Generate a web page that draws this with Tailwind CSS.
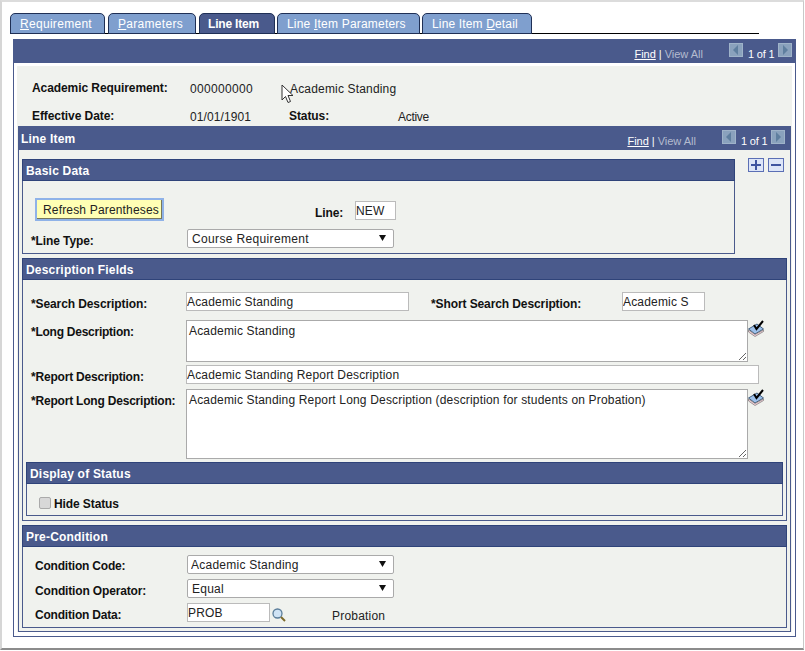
<!DOCTYPE html>
<html>
<head>
<meta charset="utf-8">
<script src="https://cdn.jsdelivr.net/npm/@tailwindcss/browser@4"></script>
</head>
<body class="bg-white">
<div class="relative w-[805px] h-[651px] overflow-hidden bg-white font-['Liberation_Sans',Arial,sans-serif] text-[12px] leading-[14px] tracking-[0.17px] text-[#222]">
  <div class="w-[804px] h-[650px] border-l-2 border-t-2 border-l-[#d6d6d6] border-t-[#dcdcdc] border-r border-b-2 border-r-[#c8c8c8] border-b-[#8c8c8c]">

    <!-- tabs -->
    <div class="ml-[8px] mt-[10px] w-[749px] h-[22px] border-b border-black flex items-end tracking-[0.3px]">
      <div class="w-[95px] h-[21px] -mb-px rounded-t-[5px] border border-[#1f2f55] bg-[#7f9fce] text-white flex items-center pl-[9px]"><span><u>R</u>equirement</span></div>
      <div class="ml-[3px] w-[88px] h-[21px] -mb-px rounded-t-[5px] border border-[#1f2f55] bg-[#7f9fce] text-white flex items-center pl-[9px]"><span><u>P</u>arameters</span></div>
      <div class="ml-[3px] w-[76px] h-[21px] -mb-px rounded-t-[5px] border border-[#1f2f55] bg-[#4a5a8c] text-white font-bold tracking-[-0.2px] flex items-center pl-[8px]">Line Item</div>
      <div class="ml-[2px] w-[143px] h-[21px] -mb-px rounded-t-[5px] border border-[#1f2f55] bg-[#7f9fce] text-white tracking-[0.2px] flex items-center pl-[9px]"><span>Line <u>I</u>tem Parameters</span></div>
      <div class="ml-[2px] w-[110px] h-[21px] -mb-px rounded-t-[5px] border border-[#1f2f55] bg-[#7f9fce] text-white tracking-[0.15px] flex items-center pl-[9px]"><span>Line Item <u>D</u>etail</span></div>
    </div>

    <!-- outer frame -->
    <div class="ml-[11px] mt-[5px] w-[783px] h-[598px] border border-[#4a5a8c] bg-white flex flex-col">
      <div class="h-[24px] -mt-px -mx-px bg-[#4a5a8c] flex justify-end shrink-0">
        <div class="flex items-start h-[24px] text-[11px] tracking-[0px] mr-[4px]">
          <u class="text-white mt-[8px]">Find</u><span class="text-white mx-[3px] mt-[8px]">|</span><span class="text-[#b4bccf] mt-[8px]">View All</span>
          <span class="ml-[26px] mt-[4px] w-[14px] h-[14px] bg-[#8aa2bd] border border-[#9fb3c9] flex items-center justify-center"><svg width="6" height="10" viewBox="0 0 6 10"><path d="M5 0V10L0 5Z" fill="#5f7f9f"/></svg></span>
          <span class="mx-[5px] mt-[8px] w-[25px] text-white tracking-[-0.2px] whitespace-nowrap">1 of 1</span>
          <span class="mt-[4px] w-[14px] h-[14px] bg-[#8aa2bd] border border-[#9fb3c9] flex items-center justify-center"><svg width="6" height="10" viewBox="0 0 6 10"><path d="M1 0V10L6 5Z" fill="#5f7f9f"/></svg></span>
        </div>
      </div>

      <div class="mt-[3px] mx-[3px] h-[566px] bg-[#f0f2ee] flex flex-col">
        <!-- key block -->
        <div class="relative h-[60px] pl-[15px] shrink-0">
          <div class="flex pt-[15px] h-[36px]">
            <span class="w-[158px] font-bold tracking-[-0.08px] text-[#111]">Academic Requirement:</span>
            <span class="w-[100px] mt-[1px] tracking-[0.33px]">000000000</span>
            <span class="mt-[1px]">Academic Standing</span>
          </div>
          <div class="flex pt-[7px]">
            <span class="w-[158px] font-bold tracking-[-0.08px] text-[#111]">Effective Date:</span>
            <span class="w-[99px] mt-[1px] tracking-[0.1px]">01/01/1901</span>
            <span class="w-[109px] font-bold tracking-[-0.08px] text-[#111]">Status:</span>
            <span class="mt-[1px] tracking-[-0.3px]">Active</span>
          </div>
          <svg class="absolute left-[264px] top-[18px]" width="13" height="20" viewBox="0 0 13 20"><path d="M1 1V16L4.5 12.5L7 18.5L9.5 17.5L7 11.5H12Z" fill="#fff" stroke="#333" stroke-width="1"/></svg>
        </div>

        <!-- inner frame -->
        <div class="ml-[1px] w-[773px] h-[506px] border border-[#4a5a8c] bg-[#f0f2ee] flex flex-col shrink-0">
          <div class="h-[24px] -mt-px -mx-px bg-[#4a5a8c] flex justify-between shrink-0 pl-[3px]">
            <span class="text-white font-bold tracking-[0.2px] mt-[6px]">Line Item</span>
            <div class="flex items-start text-[11px] tracking-[0px] mr-[6px]">
              <u class="text-white mt-[8px]">Find</u><span class="text-white mx-[3px] mt-[8px]">|</span><span class="text-[#b4bccf] mt-[8px]">View All</span>
              <span class="ml-[26px] mt-[4px] w-[14px] h-[14px] bg-[#8aa2bd] border border-[#9fb3c9] flex items-center justify-center"><svg width="6" height="10" viewBox="0 0 6 10"><path d="M5 0V10L0 5Z" fill="#5f7f9f"/></svg></span>
              <span class="mx-[5px] mt-[8px] w-[25px] text-white tracking-[-0.2px] whitespace-nowrap">1 of 1</span>
              <span class="mt-[4px] w-[14px] h-[14px] bg-[#8aa2bd] border border-[#9fb3c9] flex items-center justify-center"><svg width="6" height="10" viewBox="0 0 6 10"><path d="M1 0V10L6 5Z" fill="#5f7f9f"/></svg></span>
            </div>
          </div>

          <div class="pl-[3px] pt-[9px] flex flex-col">
            <!-- Basic Data -->
            <div class="flex items-start">
              <div class="w-[713px] h-[95px] border border-[#4a5a8c] flex flex-col">
                <div class="h-[22px] -mt-px -mx-px bg-[#4a5a8c] border border-[#2f4379] text-white font-bold pl-[3px] pt-[1px] flex items-center tracking-[0.2px] shrink-0">Basic Data</div>
                <div class="flex items-start pl-[12px] pt-[17px] h-[30px]">
                  <button class="w-[129px] h-[23px] bg-[#ffffb4] border-2 border-[#8fb2e8] text-left pl-[6px] text-[#222] whitespace-nowrap shadow-[inset_-1px_-1px_0_#77775a]">Refresh Parentheses</button>
                  <span class="ml-[151px] w-[40px] mt-[8px] font-bold tracking-[-0.1px] text-[#111]">Line:</span>
                  <input class="mt-[3px] w-[41px] h-[19px] bg-white border border-[#bbb] px-[0px]" value="NEW">
                </div>
                <div class="flex items-start pl-[8px] pt-[18px]">
                  <span class="w-[156px] mt-[5px] font-bold tracking-[-0.1px] text-[#111]">*Line Type:</span>
                  <div class="relative">
                    <select class="appearance-none w-[207px] h-[19px] bg-white border border-[#aaa] rounded-[2px] pl-[4px] tracking-[0.35px]"><option>Course Requirement</option></select>
                    <svg class="absolute right-[8px] top-[6px]" width="7" height="6" viewBox="0 0 7 6"><path d="M0 0H7L3.5 6Z" fill="#111"/></svg>
                  </div>
                </div>
              </div>
              <div class="ml-[13px] -mt-[1px] flex gap-[4px]">
                <span class="w-[16px] h-[14px] bg-[#dde6f8] border border-[#5b6fb5] flex items-center justify-center"><svg width="10" height="10" viewBox="0 0 10 10"><path d="M0 5H10M5 0V10" stroke="#3f55a0" stroke-width="2"/></svg></span>
                <span class="w-[16px] h-[14px] bg-[#dde6f8] border border-[#5b6fb5] flex items-center justify-center"><svg width="10" height="10" viewBox="0 0 10 10"><path d="M0 5H10" stroke="#3f55a0" stroke-width="2"/></svg></span>
              </div>
            </div>

            <!-- Description Fields -->
            <div class="mt-[4px] w-[765px] h-[263px] border border-[#4a5a8c] flex flex-col">
              <div class="h-[22px] -mt-px -mx-px bg-[#4a5a8c] border border-[#2f4379] text-white font-bold pl-[3px] pt-[1px] flex items-center tracking-[0.2px] shrink-0">Description Fields</div>
              <div class="flex items-start pl-[8px] pt-[12px]">
                <span class="w-[155px] mt-[5px] font-bold tracking-[-0.1px] text-[#111]">*Search Description:</span>
                <input class="w-[223px] h-[19px] bg-white border border-[#bbb] px-[0px]" value="Academic Standing">
                <span class="w-[191px] ml-[22px] mt-[5px] font-bold tracking-[-0.1px] text-[#111]">*Short Search Description:</span>
                <input class="w-[83px] h-[19px] bg-white border border-[#bbb] px-[0px]" value="Academic S">
              </div>
              <div class="flex items-start pl-[8px] pt-[9px]">
                <span class="w-[155px] mt-[5px] font-bold tracking-[-0.25px] text-[#111]">*Long Description:</span>
                <textarea class="w-[562px] h-[42px] bg-white border border-[#aaa] px-[2px] py-[3px]">Academic Standing</textarea>
                <svg width="17" height="17" viewBox="0 0 17 17"><path d="M0.5 9L9 4L15.5 9L7 14Z" fill="#9cc0ea" stroke="#44607f"/><path d="M0.5 10V12L7 16.5L15.5 11.5V10L7 14.5Z" fill="#f3d0d8" stroke="#666" stroke-width=".6"/><path d="M6 5L8.5 9L15 1" fill="none" stroke="#000" stroke-width="2"/></svg>
              </div>
              <div class="flex items-start pl-[8px] pt-[3px]">
                <span class="w-[155px] mt-[5px] font-bold tracking-[-0.2px] text-[#111]">*Report Description:</span>
                <input class="w-[573px] h-[19px] bg-white border border-[#bbb] px-[0px]" value="Academic Standing Report Description">
              </div>
              <div class="flex items-start pl-[8px] pt-[5px]">
                <span class="w-[155px] mt-[5px] font-bold tracking-[-0.2px] text-[#111] whitespace-nowrap">*Report Long Description:</span>
                <textarea class="w-[562px] h-[70px] bg-white border border-[#aaa] px-[2px] py-[3px]">Academic Standing Report Long Description (description for students on Probation)</textarea>
                <svg width="17" height="17" viewBox="0 0 17 17"><path d="M0.5 9L9 4L15.5 9L7 14Z" fill="#9cc0ea" stroke="#44607f"/><path d="M0.5 10V12L7 16.5L15.5 11.5V10L7 14.5Z" fill="#f3d0d8" stroke="#666" stroke-width=".6"/><path d="M6 5L8.5 9L15 1" fill="none" stroke="#000" stroke-width="2"/></svg>
              </div>
              <!-- Display of Status -->
              <div class="ml-[3px] mt-[3px] w-[757px] h-[54px] border border-[#4a5a8c] flex flex-col">
                <div class="h-[22px] -mt-px -mx-px bg-[#4a5a8c] border border-[#2f4379] text-white font-bold pl-[3px] pt-[1px] flex items-center tracking-[0.2px] shrink-0">Display of Status</div>
                <div class="flex items-center pl-[12px] pt-[11px]">
                  <span class="w-[12px] h-[12px] rounded-[2px] bg-[#d8d8d8] border border-[#aaa]"></span>
                  <span class="ml-[3px] mt-[2px] font-bold tracking-[-0.1px] text-[#111]">Hide Status</span>
                </div>
              </div>
            </div>

            <!-- Pre-Condition -->
            <div class="mt-[4px] w-[765px] h-[103px] border border-[#4a5a8c] flex flex-col">
              <div class="h-[22px] -mt-px -mx-px bg-[#4a5a8c] border border-[#2f4379] text-white font-bold pl-[3px] pt-[1px] flex items-center tracking-[0.2px] shrink-0">Pre-Condition</div>
              <div class="flex items-start pl-[12px] pt-[8px]">
                <span class="w-[152px] mt-[4px] font-bold tracking-[-0.2px] text-[#111]">Condition Code:</span>
                <div class="relative">
                  <select class="appearance-none w-[207px] h-[19px] bg-white border border-[#aaa] rounded-[2px] pl-[3px] tracking-[0.25px]"><option>Academic Standing</option></select>
                  <svg class="absolute right-[8px] top-[6px]" width="7" height="6" viewBox="0 0 7 6"><path d="M0 0H7L3.5 6Z" fill="#111"/></svg>
                </div>
              </div>
              <div class="flex items-start pl-[12px] pt-[5px]">
                <span class="w-[152px] mt-[5px] font-bold tracking-[-0.15px] text-[#111]">Condition Operator:</span>
                <div class="relative">
                  <select class="appearance-none w-[207px] h-[19px] bg-white border border-[#aaa] rounded-[2px] pl-[4px] tracking-[0.25px]"><option>Equal</option></select>
                  <svg class="absolute right-[8px] top-[6px]" width="7" height="6" viewBox="0 0 7 6"><path d="M0 0H7L3.5 6Z" fill="#111"/></svg>
                </div>
              </div>
              <div class="flex items-start pl-[12px] pt-[5px]">
                <span class="w-[152px] mt-[5px] font-bold tracking-[-0.2px] text-[#111]">Condition Data:</span>
                <input class="w-[83px] h-[19px] bg-white border border-[#bbb] px-[0px]" value="PROB">
                <svg class="ml-[2px] mt-[5px]" width="14" height="14" viewBox="0 0 14 14"><circle cx="5.5" cy="5.5" r="4.5" fill="#cfe3f5" stroke="#5a7d9a" stroke-width="1.3"/><path d="M9 9L13 13" stroke="#7d6a2a" stroke-width="2"/></svg>
                <span class="ml-[46px] mt-[6px] tracking-[0.2px]">Probation</span>
              </div>
            </div>
          </div>
        </div>
      </div>
    </div>
  </div>
</div>
</body>
</html>
